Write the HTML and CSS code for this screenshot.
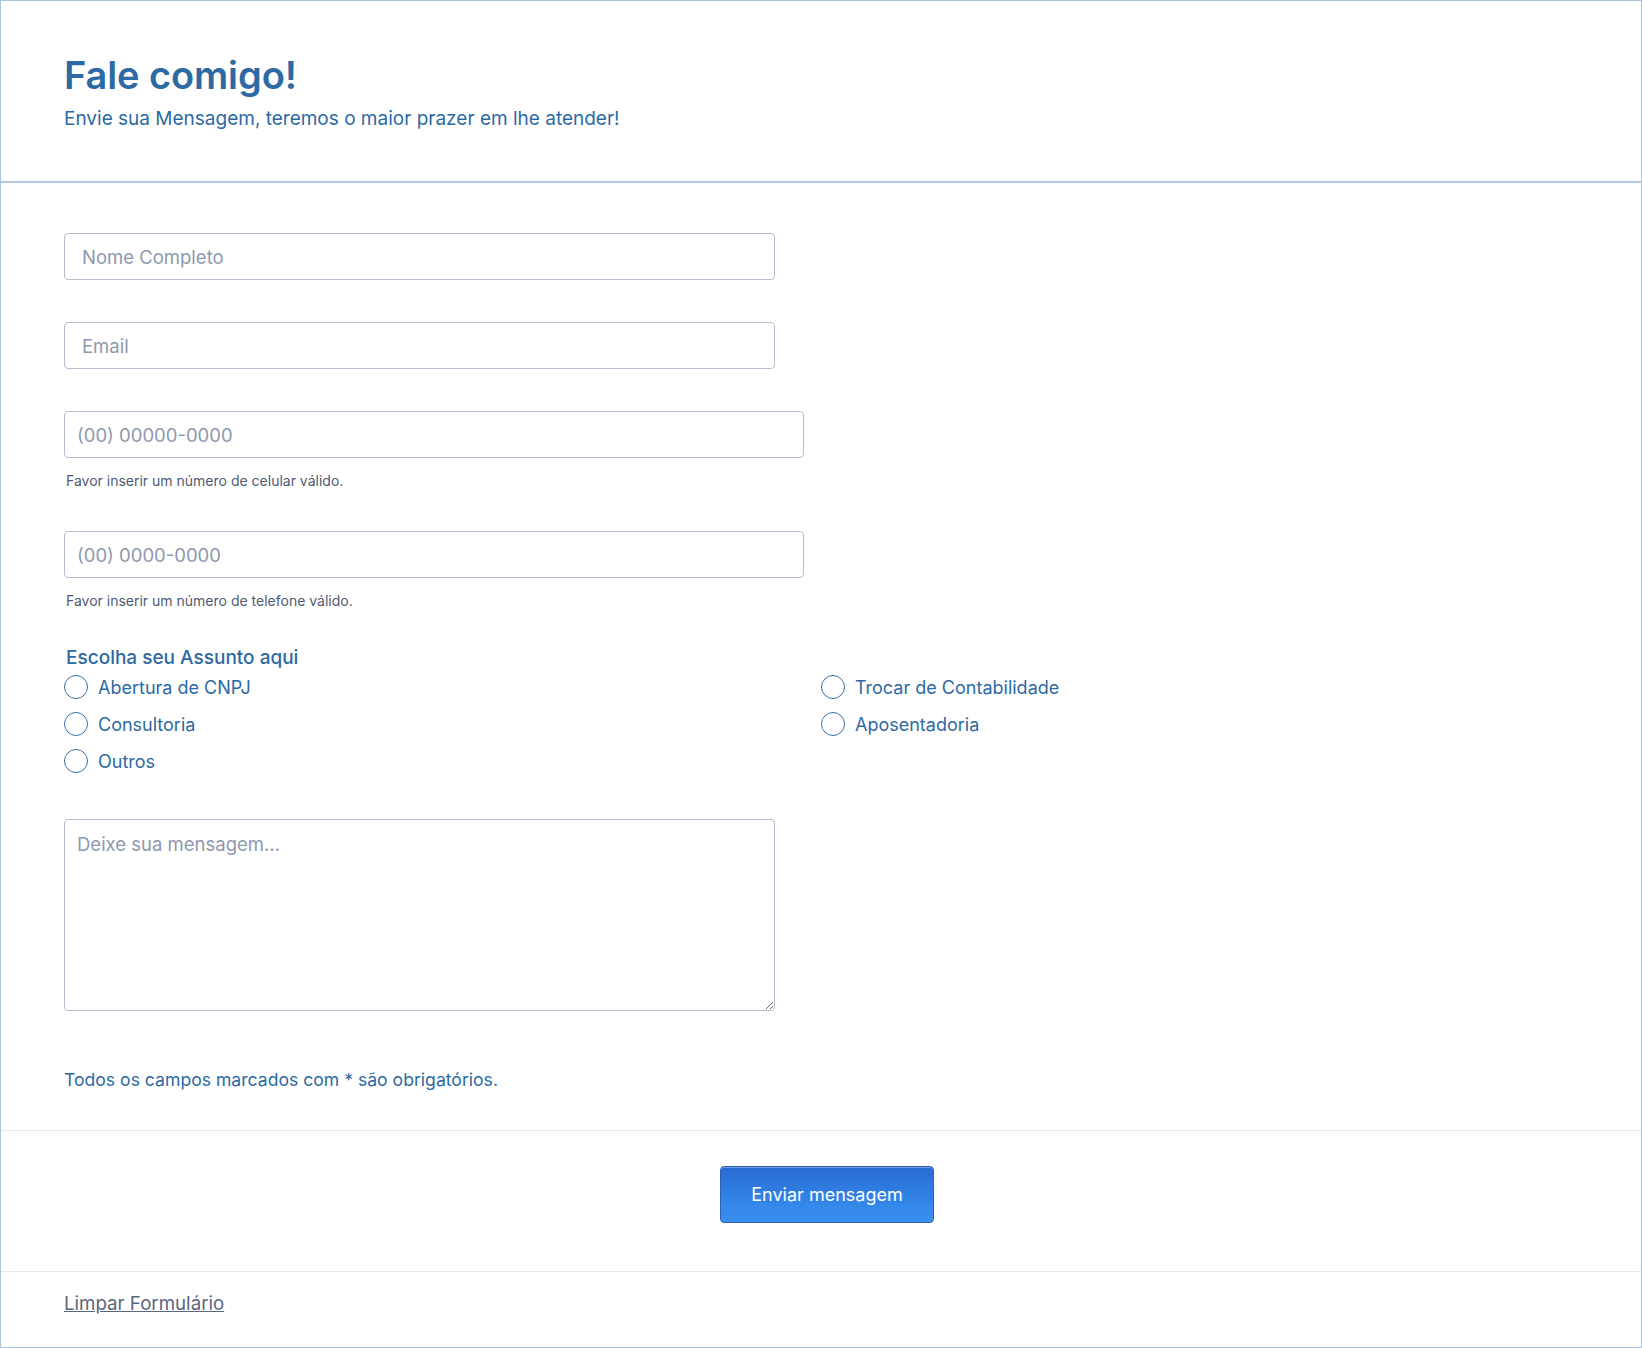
FILE: index.html
```html
<!DOCTYPE html>
<html lang="pt-BR">
<head>
<meta charset="utf-8">
<title>Fale comigo!</title>
<link rel="stylesheet" href="styles.css">
</head>
<body>
<div class="form-card">
  <header class="form-header">
    <h1>Fale comigo!</h1>
    <p>Envie sua Mensagem, teremos o maior prazer em lhe atender!</p>
  </header>
  <form class="form-body">
    <div class="field">
      <input class="text-input wide" type="text" placeholder="Nome Completo">
    </div>
    <div class="field">
      <input class="text-input wide" type="email" placeholder="Email">
    </div>
    <div class="field">
      <input class="text-input phone" type="tel" placeholder="(00) 00000-0000">
      <div class="help">Favor inserir um número de celular válido.</div>
    </div>
    <div class="field">
      <input class="text-input phone" type="tel" placeholder="(00) 0000-0000">
      <div class="help">Favor inserir um número de telefone válido.</div>
    </div>
    <div class="field radios">
      <div class="radio-title">Escolha seu Assunto aqui</div>
      <div class="radio-grid">
        <label class="radio"><input type="radio" name="assunto"><span>Abertura de CNPJ</span></label>
        <label class="radio"><input type="radio" name="assunto"><span>Trocar de Contabilidade</span></label>
        <label class="radio"><input type="radio" name="assunto"><span>Consultoria</span></label>
        <label class="radio"><input type="radio" name="assunto"><span>Aposentadoria</span></label>
        <label class="radio"><input type="radio" name="assunto"><span>Outros</span></label>
      </div>
    </div>
    <div class="field">
      <textarea class="message" placeholder="Deixe sua mensagem..."></textarea>
    </div>
    <p class="required">Todos os campos marcados com * são obrigatórios.</p>
  </form>
  <div class="actions">
    <button class="submit" type="button">Enviar mensagem</button>
  </div>
  <div class="footer">
    <a class="clear-link" href="#">Limpar Formulário</a>
  </div>
</div>
</body>
</html>
```

FILE: styles.css
```css
* { box-sizing: border-box; }

html, body {
  margin: 0;
  padding: 0;
  background: #ffffff;
}

body {
  font-family: Inter, "Noto Sans", "Liberation Sans", sans-serif;
  color: #2d6aa3;
}

.form-card {
  width: 1642px;
  height: 1348px;
  border: 1px solid #aac4dd;
  display: flex;
  flex-direction: column;
}

.form-header {
  padding: 51px 63px 51px;
  border-bottom: 2px solid #b3cbe2;
}

.form-header h1 {
  margin: 0;
  font-size: 38px;
  line-height: 46px;
  font-weight: 600;
  color: #2d6aa3;
  letter-spacing: -0.1px;
}

.form-header p {
  margin: 10px 0 0;
  font-size: 19px;
  line-height: 22px;
  color: #2d6aa3;
}

.form-body {
  padding: 50px 63px 0;
  display: flex;
  flex-direction: column;
}

.field {
  display: flex;
  flex-direction: column;
  margin-bottom: 42px;
}

.text-input {
  height: 47px;
  border: 1px solid #b6bdcf;
  border-radius: 4px;
  font-family: inherit;
  font-size: 18.5px;
  color: #333;
  background: #fff;
  outline: none;
}

.text-input::placeholder,
.message::placeholder {
  color: #8e98ae;
}

.text-input.wide {
  width: 711px;
  padding: 0 17px;
}

.text-input.phone {
  width: 740px;
  padding: 0 12px;
}

.help {
  margin-top: 13px;
  font-size: 14px;
  line-height: 20px;
  color: #505b74;
  padding-left: 2px;
}

.field:nth-child(3) { margin-bottom: 40px; }
.field:nth-child(4) { margin-bottom: 35px; }

.radio-title {
  font-size: 19px;
  line-height: 24px;
  font-weight: 500;
  color: #2d6aa3;
  padding-left: 2px;
  margin-bottom: 5px;
}

.radio-grid {
  display: grid;
  grid-template-columns: 757px 1fr;
  row-gap: 13px;
}

.radio {
  display: flex;
  align-items: center;
  gap: 10px;
  height: 24px;
  font-size: 18px;
  color: #2d6aa3;
  cursor: pointer;
}

.radio input {
  appearance: none;
  -webkit-appearance: none;
  margin: 0;
  width: 24px;
  height: 24px;
  border: 1.5px solid #3a6ea6;
  border-radius: 50%;
  background: #fff;
  flex: none;
}

.radios { margin-bottom: 46px; }

.message {
  width: 711px;
  height: 192px;
  border: 1px solid #b6bdcf;
  border-radius: 4px;
  font-family: inherit;
  font-size: 18.5px;
  line-height: 24px;
  padding: 12px 12px;
  resize: vertical;
  outline: none;
}

.field:nth-child(6) { margin-bottom: 57px; }

.required {
  margin: 0 0 38px;
  font-size: 17.6px;
  line-height: 24px;
  color: #2d6aa3;
}

.actions {
  border-top: 1px solid #e3e9f1;
  padding: 35px 0 48px;
  display: flex;
  justify-content: center;
}

.submit {
  width: 214px;
  height: 57px;
  margin-left: 12px;
  border: 1px solid #2b62b8;
  border-radius: 4px;
  background: linear-gradient(to bottom, #2a6bd3 0%, #3388e9 70%, #3a8ff0 100%);
  box-shadow: inset 0 1px 0 rgba(255,255,255,0.35);
  color: #ffffff;
  font-family: inherit;
  font-size: 18px;
  font-weight: 400;
  cursor: pointer;
}

.footer {
  border-top: 1px solid #e3e9f1;
  padding: 20px 63px 0;
  flex: 1;
}

.clear-link {
  font-size: 18.7px;
  line-height: 24px;
  color: #5b6680;
  text-decoration: underline;
}
```
